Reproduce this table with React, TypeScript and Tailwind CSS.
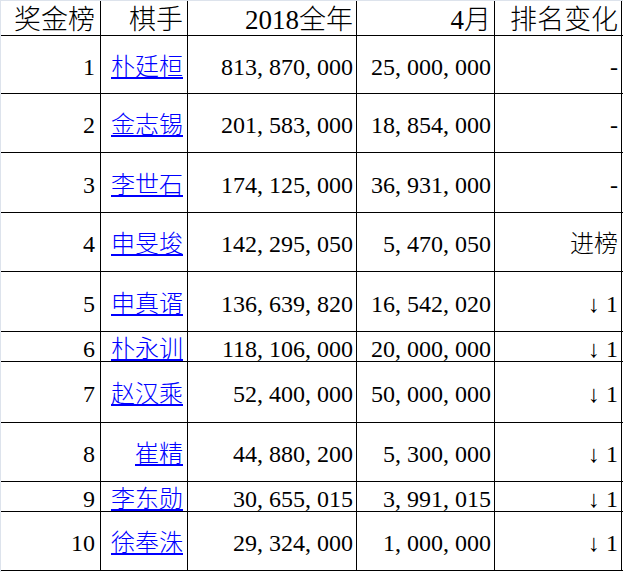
import React from 'react';

type Row = {
  rank: number;
  name: string;
  total: string;
  april: string;
  change: string;
  h: string;
};

const rows: Row[] = [
  { rank: 1, name: '朴廷桓', total: '813,870,000', april: '25,000,000', change: '-', h: 'h-[58px]' },
  { rank: 2, name: '金志锡', total: '201,583,000', april: '18,854,000', change: '-', h: 'h-[59px]' },
  { rank: 3, name: '李世石', total: '174,125,000', april: '36,931,000', change: '-', h: 'h-[60px]' },
  { rank: 4, name: '申旻埈', total: '142,295,050', april: '5,470,050', change: '进榜', h: 'h-[59px]' },
  { rank: 5, name: '申真谞', total: '136,639,820', april: '16,542,020', change: '↓ 1', h: 'h-[60px]' },
  { rank: 6, name: '朴永训', total: '118,106,000', april: '20,000,000', change: '↓ 1', h: 'h-[30px]' },
  { rank: 7, name: '赵汉乘', total: '52,400,000', april: '50,000,000', change: '↓ 1', h: 'h-[61px]' },
  { rank: 8, name: '崔精', total: '44,880,200', april: '5,300,000', change: '↓ 1', h: 'h-[59px]' },
  { rank: 9, name: '李东勋', total: '30,655,015', april: '3,991,015', change: '↓ 1', h: 'h-[30px]' },
  { rank: 10, name: '徐奉洙', total: '29,324,000', april: '1,000,000', change: '↓ 1', h: 'h-[59px]' },
];

// commas in the sheet's font take half a column, so pad them out
function Num({ value }: { value: string }) {
  const parts = value.split(',');
  return (
    <span>
      {parts.map((p, i) => (
        <React.Fragment key={i}>
          {p}
          {i < parts.length - 1 && <span className="mr-[0.25em]">,</span>}
        </React.Fragment>
      ))}
    </span>
  );
}

const cell = 'flex items-center justify-end border-r border-black pt-1';

export default function App() {
  return (
    <div
      className="w-[623px] h-[572px] bg-white border-l border-t border-[#dde3ec] text-black"
      style={{ fontFamily: '"Liberation Serif", "Noto Sans CJK SC", serif' }}
    >
      <div className="flex h-[35px] border-b border-black text-[27px] font-light leading-none">
        <div className={`${cell} w-[100px] pr-[5px] pt-0`}>奖金榜</div>
        <div className={`${cell} w-[87px] pr-[4px] pt-0`}>棋手</div>
        <div className={`${cell} w-[169px] pr-[3px] pt-0`}>2018全年</div>
        <div className={`${cell} w-[138px] pr-[3px] pt-0`}>4月</div>
        <div className={`${cell} w-[127px] pr-[3px] pt-0`}>排名变化</div>
      </div>
      {rows.map((r) => (
        <div key={r.rank} className={`flex ${r.h} border-b border-black text-[24px] leading-none`}>
          <div className={`${cell} w-[100px] pr-[5px]`}>{r.rank}</div>
          <div className={`${cell} w-[87px] pr-[4px]`}>
            <a href="#" className="text-[#0000ff] underline font-light">
              {r.name}
            </a>
          </div>
          <div className={`${cell} w-[169px] pr-[3px]`}>
            <Num value={r.total} />
          </div>
          <div className={`${cell} w-[138px] pr-[3px]`}>
            <Num value={r.april} />
          </div>
          <div className={`${cell} w-[127px] pr-[3px] font-light`}>{r.change}</div>
        </div>
      ))}
    </div>
  );
}
